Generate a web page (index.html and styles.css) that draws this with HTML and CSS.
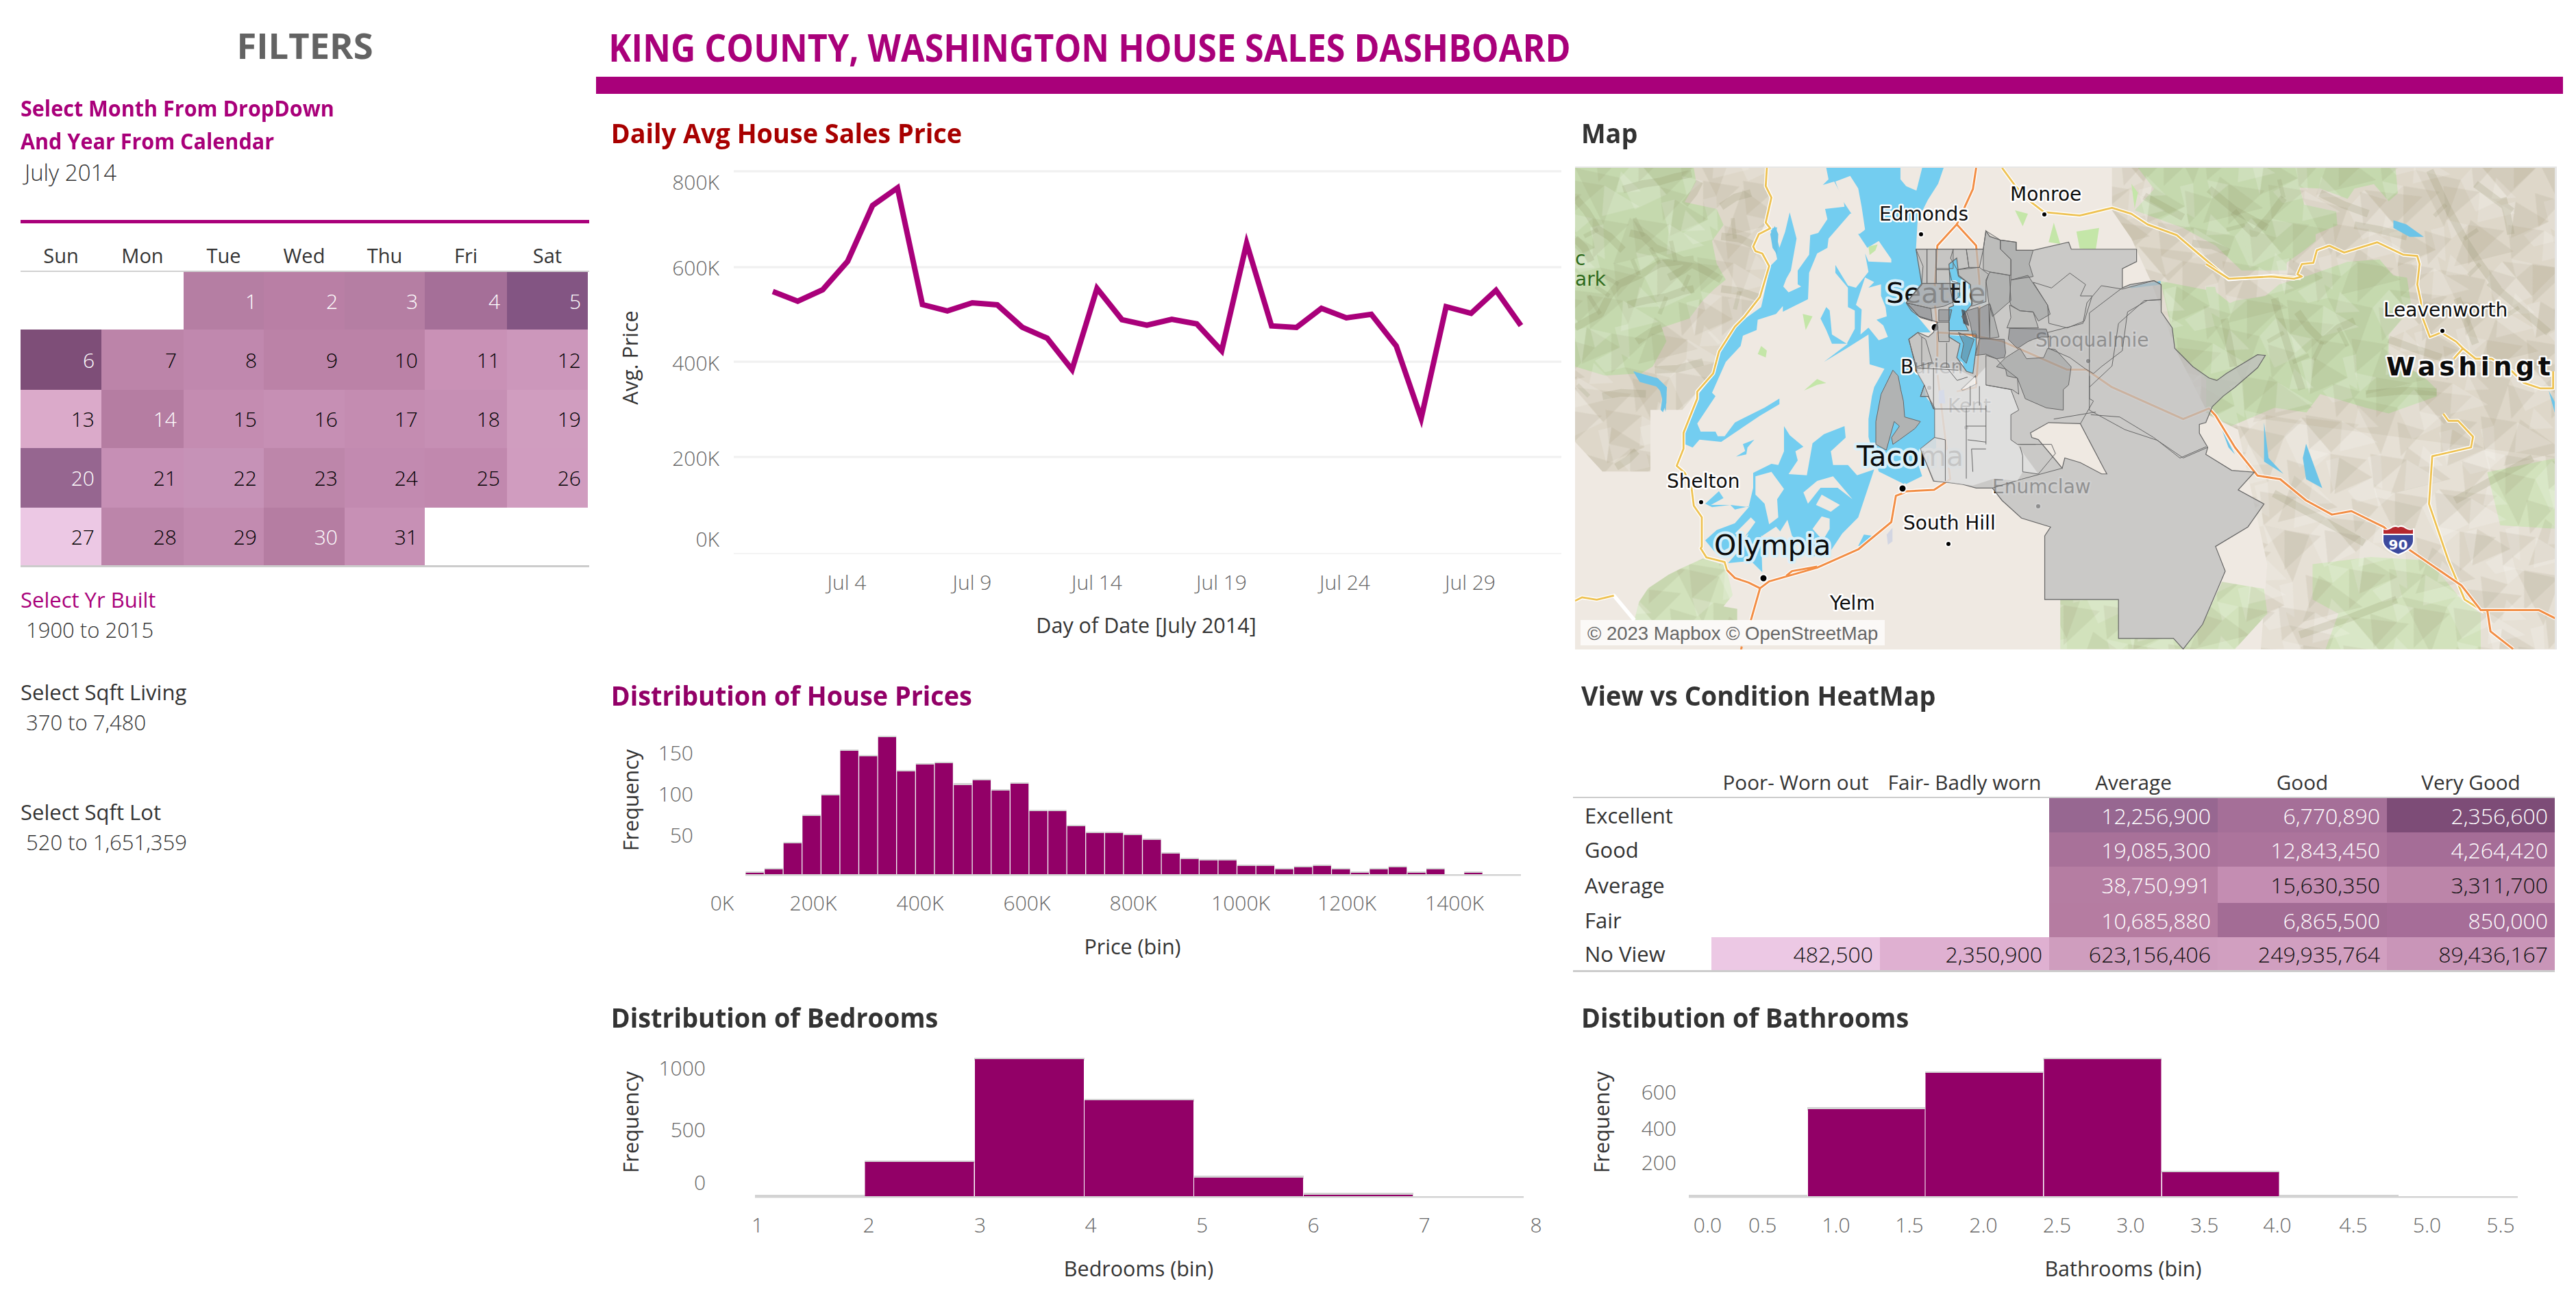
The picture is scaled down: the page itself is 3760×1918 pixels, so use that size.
FILE: index.html
```html
<!DOCTYPE html>
<html lang="en">
<head>
<meta charset="utf-8">
<title>King County House Sales Dashboard</title>
<link rel="stylesheet" href="styles.css">
</head>
<body>
<div class="dashboard">
  <aside class="sidebar">
    <h2 class="filters-title">FILTERS</h2>
    <div class="select-note">Select Month From DropDown<br>And Year From Calendar</div>
    <div class="month">July 2014</div>
    <div class="rule"></div>
    <div class="cal-head"><span>Sun</span><span>Mon</span><span>Tue</span><span>Wed</span><span>Thu</span><span>Fri</span><span>Sat</span></div>
    <div class="calendar">
      <span></span><span></span>
      <span class="lt c-b57ea3">1</span><span class="lt c-b97fa5">2</span><span class="lt c-b57ea3">3</span><span class="lt c-a56f98">4</span><span class="lt c-835583">5</span>
      <span class="lt c-7e4e78">6</span><span class="c-bc84a9">7</span><span class="c-c088ae">8</span><span class="c-bb82a7">9</span><span class="c-bb82a7">10</span><span class="c-c991b6">11</span><span class="c-cc97bb">12</span>
      <span class="c-dbaaca">13</span><span class="lt c-b57da2">14</span><span class="c-c48cb1">15</span><span class="c-c68fb4">16</span><span class="c-c48cb1">17</span><span class="c-c68fb4">18</span><span class="c-d09dbf">19</span>
      <span class="lt c-966690">20</span><span class="c-c68fb5">21</span><span class="c-c692b7">22</span><span class="c-bd86aa">23</span><span class="c-c28ab0">24</span><span class="c-c188ae">25</span><span class="c-d09cbf">26</span>
      <span class="c-ecc8e4">27</span><span class="c-bc85aa">28</span><span class="c-c28bb0">29</span><span class="lt c-b57da2">30</span><span class="c-c790b5">31</span><span></span><span></span>
    </div>
    <div class="filter first"><div class="filter-label accent">Select Yr Built</div><div class="filter-value">1900 to 2015</div></div>
    <div class="filter second"><div class="filter-label">Select Sqft Living</div><div class="filter-value">370 to 7,480</div></div>
    <div class="filter third"><div class="filter-label">Select Sqft Lot</div><div class="filter-value">520 to 1,651,359</div></div>
  </aside>

  <main class="main">
    <h1 class="page-title">KING COUNTY, WASHINGTON HOUSE SALES DASHBOARD</h1>
    <div class="title-bar"></div>
    <div class="panels">
      <section class="panel">
        <h3 class="panel-title tall red">Daily Avg House Sales Price</h3>
        <svg class="chart" width="1429" height="705" viewBox="0 0 1429 705">
          <g class="grid">
            <path d="M201 7H1409"/><path d="M201 147H1409"/><path d="M201 285H1409"/><path d="M201 424H1409"/><path class="grid-zero" d="M201 565H1409"/>
          </g>
          <text class="tick end" x="180" y="34">800K</text>
          <text class="tick end" x="180" y="159">600K</text>
          <text class="tick end" x="180" y="298">400K</text>
          <text class="tick end" x="180" y="437">200K</text>
          <text class="tick end" x="180" y="555">0K</text>
          <polyline class="price-line" points="258,182.6 294.4,196.7 330.8,180 367.2,138.5 403.6,57 440,31.3 476.4,201.6 512.8,210.8 549.2,199 585.6,202 622,234.6 658.4,250.6 694.8,296.5 731.2,178 767.6,223.6 804,231.6 840.4,223 876.8,229.8 913.2,269 949.6,112 986,232.8 1022.4,235 1058.8,207 1095.2,221 1131.6,215.7 1168,262 1204.4,367.5 1240.8,204.6 1277.2,214.4 1313.6,180.8 1350,232.2"/>
          <text class="tick mid" x="366" y="618">Jul 4</text>
          <text class="tick mid" x="549" y="618">Jul 9</text>
          <text class="tick mid" x="731" y="618">Jul 14</text>
          <text class="tick mid" x="913" y="618">Jul 19</text>
          <text class="tick mid" x="1093" y="618">Jul 24</text>
          <text class="tick mid" x="1276" y="618">Jul 29</text>
          <text class="axis mid" x="803" y="681">Day of Date [July 2014]</text>
          <text class="axis mid" transform="translate(61 279) rotate(-90)">Avg. Price</text>
        </svg>
      </section>

      <section class="panel">
        <h3 class="panel-title tall">Map</h3>
        <div class="map-frame">
          <svg class="map" width="1430" height="705" viewBox="0 0 1430 705">
            <defs>
              <pattern id="facetA" patternUnits="userSpaceOnUse" width="170" height="150" patternTransform="rotate(-14)">
                <path class="fd" d="M0 0L60 30L20 90ZM90 10L170 40L120 70ZM60 90L110 150L20 150ZM130 80L170 120L110 130Z"/>
                <path class="fl" d="M60 30L90 10L120 70L70 80ZM0 90L20 90L10 140L0 130ZM110 80L130 80L110 130ZM130 130L170 120L170 150L140 150Z"/>
              </pattern>
              <pattern id="facetB" patternUnits="userSpaceOnUse" width="110" height="130" patternTransform="rotate(31)">
                <path class="fd" d="M0 20L50 0L30 60ZM60 50L110 30L90 100ZM10 90L50 80L40 130Z"/>
                <path class="fl" d="M50 0L110 0L70 40ZM30 60L60 50L50 80ZM60 100L100 110L70 130Z"/>
              </pattern>
              <mask id="terrainMask"><use href="#terrain"/></mask>
            </defs>
            <rect class="land" width="1430" height="705"/>

            <g id="terrain">
              <g transform="scale(.3333)">
                <polygon class="tan" points="0,0 840,0 860,130 835,240 780,345 850,430 810,565 700,695 630,805 600,910 535,980 470,1060 330,1060 330,1330 120,1330 0,1200"/>
                <polygon class="green" points="0,0 520,0 530,60 480,150 620,180 650,250 600,320 620,420 660,490 610,530 560,580 500,660 380,700 400,760 340,870 290,900 130,910 0,870"/>
              </g>
              <g transform="translate(-18.9 -93) scale(.9443 .5165)">
                <polygon class="tan" points="850,180 1537,180 1537,1040 1400,1010 1250,1060 1090,960 1000,880 950,700 910,500 880,380 850,300"/>
                <polygon class="tan-soft" points="1040,880 1537,1000 1537,1540 1080,1540 1090,1300"/>
                <polygon class="green" points="890,180 1120,180 1120,470 1050,470 1010,400 960,350 885,300 915,240"/>
                <polygon class="green" points="925,500 1010,530 1100,660 1090,800 1040,900 1020,820 950,700"/>
                <polygon class="green-soft" points="1430,1040 1537,1000 1537,1200 1450,1190"/>
                <polygon class="green-soft" points="1160,1300 1250,1280 1340,1290 1390,1400 1420,1440 1420,1540 1180,1540 1200,1440 1160,1400"/>
                <polygon class="green-soft" points="770,1400 860,1400 860,1510 945,1510 960,1540 770,1540"/>
                <polygon class="green-soft" points="990,1470 1020,1350 1085,1370 1090,1440 1040,1540 960,1540"/>
              </g>
              <g transform="translate(921 -143) scale(.3333)">
                <polygon class="green" points="0,430 830,430 840,540 800,575 735,500 650,520 620,565 500,520 410,515 430,590 570,620 575,680 480,720 480,750 430,790 330,860 200,870 175,790 140,600 0,555"/>
                <polygon class="green" points="450,900 620,840 760,830 820,900 880,910 900,1040 800,1160 800,1260 950,1340 1010,1400 1010,1430 800,1505 700,1480 500,1420 440,1500 300,1480 110,1560 0,1500 0,950 40,950 60,1040 130,1010 260,990 320,940"/>
              </g>
              <g transform="translate(0 377) scale(.3333)">
                <polygon class="green-soft" points="280,770 320,710 410,650 470,620 560,580 660,610 690,740 650,790 710,800 710,850 260,850"/>
              </g>
            </g>
            <g mask="url(#terrainMask)">
              <rect class="facet-a" width="1430" height="705"/>
              <rect class="facet-b" width="1430" height="705"/>
              <g transform="scale(.3333)">
                <path class="ridge" d="M0 700L70 660L110 640L150 560L190 510L280 470L370 420L450 410L520 400M210 95L300 70L370 60L440 40L510 25M0 130L50 190L100 270L150 300L210 360M240 285L300 300L350 350L420 380L500 420M410 480L470 450L510 420L570 450L640 490M230 600L310 580L400 565L470 540L520 530M270 760L330 720L380 700M350 885L450 880L560 850M480 160L520 110L545 60M0 310L40 350L70 410M640 170L700 130L770 110M640 300L720 310L810 350M640 530L720 540L810 570M120 1000L200 985L310 990M180 1310L230 1280L270 1240"/>
                <path class="ridge-thin" d="M100 270L40 300M190 510L120 470M370 420L330 350M300 300L260 220M440 410L420 320M110 640L60 560M470 540L500 470M60 1000L10 950M150 560L90 520M280 470L250 400M400 565L370 640M700 310L690 220M720 540L700 620"/>
              </g>
              <g transform="translate(921 -143) scale(.3333)">
                <path class="ridge" d="M120 620L170 680L210 720L280 640L340 560M500 540L600 590L710 630M650 680L760 700L880 730M980 440L1050 590L1130 740L1200 850L1280 960M1300 560L1320 640L1335 720M400 1060L450 1130L510 1190L580 1130L650 1100M300 1000L340 1150L380 1280L420 1400M700 1420L860 1405L1010 1410M800 1180L910 1220L1030 1260M1180 500L1260 560L1340 620M1240 930L1370 1040L1500 1150M80 1090L100 1190L120 1300M-60 760L30 770L100 800M1100 1000L1140 1100L1180 1200"/>
                <path class="ridge-thin" d="M170 680L90 700M340 560L320 480M1050 590L1000 640M1130 740L1190 700M510 1190L470 1270M580 1130L620 1210M340 1150L270 1190M380 1280L450 1250M1200 850L1150 900M1370 1040L1310 1080"/>
              </g>
              <g transform="translate(-18.9 -93) scale(.9443 .5165)">
                <path class="ridge" d="M1000 240L1040 300L1090 350M1100 1100L1170 1170L1240 1240M1380 1120L1440 1060L1500 1000M1140 1500L1220 1450L1290 1400M900 260L930 290L960 320"/>
              </g>
            </g>

            <g transform="translate(-18.9 -93) scale(.9443 .5165)">
              <polygon class="green-pale" points="700,300 720,310 712,345"/>
              <polygon class="green-pale" points="880,225 890,250 885,295"/>
              <polygon class="green-pale" points="760,335 770,395 752,390"/>
              <polygon class="green-pale" points="795,360 830,350 825,410 800,408"/>
              <polygon class="green-pale" points="380,590 392,600 380,635"/>
              <polygon class="green-pale" points="378,810 410,780 400,800"/>
              <polygon class="green-pale" points="305,685 318,710 306,715"/>
            </g>

            <!-- Puget Sound -->
            <g transform="scale(.3333)">
              <polygon class="water" points="855,265 885,400 855,430 815,610 745,660 700,700 630,810 610,905 545,985 530,1030 480,1160 480,1210 515,1225 545,1190 640,1200 810,1085 895,1035 1285,1180 1300,1230 1330,1330 1440,1385 1500,1300 1581,1290 1581,1181 1575,1051 1535,1001 1529,951 1495,891 1460,751 1501,721 1558,721 1449,591 1524,501 1493,356 1500,230 1545,140 1590,70 1614,0 1100,0"/>
              <polygon class="land" points="845,0 1100,0 1110,50 1085,75 1135,60 1175,135 1180,170 1095,180 1105,225 1065,285 1030,295 1025,380 975,450 975,510 990,520 935,545 912,520 925,485 945,450 970,310 940,195 920,280 895,350 880,290 885,260 860,265 835,240 860,130 835,80"/>
              <polygon class="land" points="535,1120 615,1000 600,985 660,850 725,780 735,735 795,710 800,665 880,640 910,605 910,630 1020,575 1025,460 1060,375 1105,350 1110,310 1205,200 1240,200 1265,275 1240,290 1280,350 1330,320 1385,400 1385,415 1285,410 1270,375 1285,455 1230,525 1195,515 1140,425 1140,460 1195,525 1195,610 1225,625 1225,705 1190,770 1125,730 1115,625 1100,610 1075,660 1100,710 1125,770 1195,770 1090,850 1190,790 1285,730 1290,860 1355,880 1310,960 1300,1000 1285,1100 1285,1190 895,1040 895,1010 830,1050 700,1115 655,1175 625,1175 615,1155 550,1155"/>
              <polygon class="land" points="1270,480 1310,500 1285,525 1340,510 1340,560 1360,610 1365,650 1320,665 1350,690 1370,740 1330,755 1285,700 1250,730 1255,620 1230,600"/>
              <polygon class="land" points="1205,35 1240,90 1255,170 1270,270 1245,290 1210,200 1170,140 1140,60"/>
              <polygon class="land" points="1425,0 1520,0 1505,60 1495,100 1450,80 1425,50"/>
              <polygon class="green-pale" points="1285,345 1325,335 1315,362 1290,382"/>
              <polygon class="green-pale" points="997,640 1040,650 1010,710"/>
              <polygon class="green-pale" points="1003,975 1060,925 1100,942 1060,950"/>
              <polygon class="green-pale" points="800,815 815,780 840,800 835,830"/>
              <polygon class="water" points="785,1190 735,1210 745,1240 705,1265 750,1255 755,1225"/>
              <polygon class="lake" points="260,890 290,915 360,920 400,990 400,1030 385,1070 375,1060 385,990 340,940 280,930"/>
              <polygon class="lake" points="875,255 890,290 885,380 865,350 855,290"/>
              <polygon class="water" points="1360,1300 1410,1290 1500,1290 1520,1350 1450,1385 1390,1340"/>
            </g>
            <g transform="translate(0 377) scale(.3333)">
              <polygon class="water" points="915,0 940,40 1000,90 965,110 975,150 935,210 1015,215 1040,75 1090,35 1180,0 1185,50 1120,110 1130,170 1195,170 1235,215 1310,190 1240,400 1170,470 1110,560 1040,570 950,480 930,410 880,490 815,480 820,640 770,590 670,600 740,520 760,470 700,520 620,560 570,500 620,455 700,425 765,350 700,365 680,345 600,355 570,340 630,285 650,315 595,345 680,345 760,355 780,270 780,205 860,165 890,170 915,110"/>
              <polygon class="land" points="1055,345 1080,300 1160,345 1120,375"/>
              <polygon class="land" points="1040,450 1080,395 1115,405 1115,450 1085,500"/>
              <polygon class="land" points="915,275 860,200 790,220 790,300 830,340 850,430 890,400 885,320"/>
              <polygon class="land" points="770,400 790,420 740,490 700,470"/>
              <polygon class="land" points="1000,290 1060,240 1130,220 1190,290 1215,320 1150,270 1075,270 1020,340"/>
              <polygon class="land" points="820,480 880,440 915,480 900,530"/>
              <polygon class="lake-gray" points="1365,475 1390,445 1390,505 1370,520"/>
              <polygon class="water" points="1240,525 1265,475 1300,480 1250,525"/>
            </g>
            <g transform="translate(-18.9 -93) scale(.9443 .5165)">
              <polygon class="water" points="598,452 610,435 613,484 631,510 634,565 618,600 628,640 640,640 640,690 635,761 625,755 610,716 615,677 598,658 598,575 605,570 600,520"/>
              <polygon class="lake" points="1085,900 1092,1000 1115,1045 1085,1010"/>
              <polygon class="lake" points="1150,960 1175,1085 1150,1060 1145,1000"/>
              <polygon class="lake" points="1020,920 1040,990 1030,970"/>
              <polygon class="lake" points="1525,810 1537,850 1537,890"/>
              <polygon class="lake" points="875,515 925,500 925,510 880,520"/>
              <polygon class="lake" points="1285,328 1305,340 1332,375 1310,375 1285,350"/>
              <polygon class="lake" points="110,755 148,775 162,800 160,870 150,800 120,785"/>
            </g>

            <!-- roads -->
            <g transform="scale(.3333)">
              <path class="casing" d="M840 0L835 80L860 130L835 240L855 265L805 290L780 345L790 365L820 375L850 430L810 565L740 655L700 695L630 805L605 900L535 980L535 1010L475 1160L475 1230L445 1305L480 1335L510 1400L520 1480L555 1530V1660L550 1666L575 1706L655 1726L665 1761"/>
              <path class="yel" d="M840 0L835 80L860 130L835 240L855 265L805 290L780 345L790 365L820 375L850 430L810 565L740 655L700 695L630 805L605 900L535 980L535 1010L475 1160L475 1230L445 1305L480 1335L510 1400L520 1480L555 1530V1660L550 1666L575 1706L655 1726L665 1761"/>
            </g>
            <g transform="translate(0 377) scale(.3333)">
              <path class="casing" d="M0 765L30 750L95 760L170 742L260 850"/>
              <path class="yel" d="M0 765L30 750L95 760L170 742"/>
              <path class="casing" d="M665 630L700 665L760 685L810 710L850 680L1060 620L1240 540L1385 420L1405 305L1460 285L1560 280M810 710L770 850M925 655L950 635L1060 615"/>
              <path class="org" d="M665 630L700 665L760 685L810 710L850 680L1060 620L1240 540L1385 420L1405 305L1460 285L1560 280M810 710L770 850M925 655L950 635L1060 615M730 965L725 990"/>
            </g>
            <g transform="translate(-18.9 -93) scale(.9443 .5165)">
              <path class="casing" d="M680 180L700 230L720 270L745 305L800 315L850 293L880 310L905 340L950 370L1030 495L1100 485L1142 492"/>
              <path class="yel" d="M680 180L700 230L720 270L745 305L800 315L850 293L880 310L905 340L950 370L1030 495L1100 485L1142 492"/>
              <path class="casing" d="M1362 875L1370 895L1385 895L1408 940L1405 970L1345 995L1340 1130L1370 1290L1395 1400L1425 1435"/>
              <path class="yel" d="M1362 875L1370 895L1385 895L1408 940L1405 970L1345 995L1340 1130L1370 1290L1395 1400L1425 1435"/>
              <path class="casing" d="M640 180L635 240L610 340L580 400L575 540L580 640L580 760L600 1060L575 1090L525 1095M610 340L640 400L645 500L645 660L640 800L610 812M580 645L625 650L680 670L780 750L810 750L850 800L960 890L1000 860L1010 880L1040 970L1075 1050L1110 1060L1150 1120L1190 1160L1220 1150L1270 1195L1310 1260L1390 1360L1420 1430L1510 1430L1537 1455M1430 1430L1435 1490L1470 1540"/>
              <path class="org" d="M640 180L635 240L610 340L580 400L575 540L580 640L580 760L600 1060L575 1090L525 1095M610 340L640 400L645 500L645 660L640 800L610 812M580 645L625 650L680 670L780 750L810 750L850 800L960 890L1000 860L1010 880L1040 970L1075 1050L1110 1060L1150 1120L1190 1160L1220 1150L1270 1195L1310 1260L1390 1360L1420 1430L1510 1430L1537 1455M1430 1430L1435 1490L1470 1540"/>
            </g>
            <g transform="translate(921 -143) scale(.3333)">
              <path class="casing" d="M0 850L100 915L285 905L385 915L420 905L400 895L420 850L470 845L485 790L540 770L605 800L750 755L865 810L925 815L935 850L925 940L940 1010L950 1090L980 1170L1030 1150L1095 1190L1125 1220L1180 1265L1250 1265L1340 1320L1390 1370L1465 1395L1520 1395V1320M1125 1220L1085 1265"/>
              <path class="yel" d="M0 850L100 915L285 905L385 915L420 905L400 895L420 850L470 845L485 790L540 770L605 800L750 755L865 810L925 815L935 850L925 940L940 1010L950 1090L980 1170L1030 1150L1095 1190L1125 1220L1180 1265L1250 1265L1340 1320L1390 1370L1465 1395L1520 1395V1320M1125 1220L1085 1265"/>
            </g>

            <!-- places, under the county shading -->
            <g class="dots">
              <circle cx="505" cy="97" r="4"/><circle cx="685" cy="68" r="4"/><circle cx="525.5" cy="233" r="6"/>
              <circle cx="478" cy="468" r="5.5"/><circle cx="184" cy="488" r="4"/><circle cx="275" cy="599" r="5.5"/>
              <circle cx="545" cy="549" r="4"/><circle cx="1266" cy="238" r="4"/><circle cx="558" cy="289" r="4"/>
              <circle cx="571" cy="379" r="4"/><circle cx="517" cy="321" r="4"/><circle cx="749" cy="282" r="4"/><circle cx="676" cy="494" r="4"/>
            </g>
            <text class="place" x="444" y="77">Edmonds</text>
            <text class="place" x="635" y="48">Monroe</text>
            <text class="place" x="134" y="467">Shelton</text>
            <text class="place" x="479" y="528">South Hill</text>
            <text class="place" x="372" y="645">Yelm</text>
            <text class="place" x="475" y="300">Burien</text>
            <text class="place" x="544" y="357">Kent</text>
            <text class="place" x="672" y="261">Snoqualmie</text>
            <text class="place" x="609" y="475">Enumclaw</text>
            <text class="place" x="1180" y="217">Leavenworth</text>
            <text class="place big" x="454" y="197">Seattle</text>
            <text class="place big" x="411" y="435">Tacoma</text>
            <text class="place big" x="203" y="565">Olympia</text>
            <text class="place state" x="1184" y="303">Washingt</text>
            <text class="park" x="0" y="142">c</text>
            <text class="park" x="0" y="172">ark</text>

            <!-- King County zip areas -->
            <g transform="translate(-18.9 -93) scale(.9443 .5165)">
              <path class="county" d="M547 410H651L655 358L661 374L677 384L702 390V413H728L783 390L787 410H888V445L866 465V519L878 510L915 499L926 510V587L943 632L947 690L975 742L1000 774L1012 781L1027 761L1075 708L1087 710L1075 745L1040 800L1022 825L1005 855L995 900L985 905V930L998 970L995 990L1035 1035L1070 1040L1045 1090L1085 1130L1060 1195L1010 1250L1025 1320L990 1470L960 1540L945 1510H860V1400H746V1220L755 1195L710 1170L680 1120L665 1085H640L620 1075L600 1070L574 1065L554 974L576 942V858L566 826H554L560 794L548 755L536 664L550 645L566 658L574 645L580 616L552 600L532 561L556 510ZM598 452L610 435L613 484L631 510L634 565L618 600L628 640H598V575L605 570L600 520ZM598 650H640V690L635 761L625 755L610 716L615 677L598 658ZM724 929L752 900L801 903L838 1032L842 1045H834L801 1013L777 1000L773 1029L760 1000L736 948L726 942ZM617 806L639 768L641 790L619 810Z"/>
              <path class="zone-line" d="M815 590V800L815 865L870 920L920 950L960 1000L998 970M866 519L815 590M665 1085L710 1060L773 1029M926 553L900 555L860 620L850 740L815 800M825 870L760 890"/>
            </g>
            <g transform="translate(351 77) scale(.3827 .3333)">
              <polygon class="light-zone" points="450,640 540,650 610,690 650,640 650,720 745,740 775,830 745,850 745,960 770,980 780,1000 850,1110 790,1100 770,1140 680,1130 600,1160 455,1140 400,1000 455,950 455,820 430,770 415,720 385,660"/>
              <polygon class="zip d0" points="383,125 425,125 425,275 405,275 410,200"/>
              <polygon class="zip d0" points="425,125 460,125 460,275 425,275"/>
              <polygon class="zip d0" points="460,125 525,125 525,210 460,210"/>
              <polygon class="zip d0" points="525,125 575,125 585,205 540,215 515,165"/>
              <polygon class="zip d0" points="575,125 640,125 625,205 585,205"/>
              <polygon class="zip d0" points="460,215 510,215 520,265 550,275 460,275"/>
              <polygon class="zip d2" points="405,275 550,275 550,330 520,360 490,375 440,385 345,360"/>
              <polygon class="zip d3" points="345,360 440,385 445,440 400,425 365,395"/>
              <polygon class="zip d3" points="470,390 520,390 510,440 470,440"/>
              <polygon class="zip d1" points="465,445 510,445 510,530 470,530"/>
              <polygon class="zip d1" points="540,215 625,205 660,235 650,270 650,355 595,375 590,280 545,245"/>
              <polygon class="zip d3" points="575,395 620,380 625,515 600,510 590,450"/>
              <polygon class="zip d3" points="625,385 660,365 665,515 625,515"/>
              <polygon class="zip d2" points="665,365 680,420 700,510 665,515"/>
              <polygon class="zip d3" points="545,490 605,520 590,570 575,625 555,600 565,540"/>
              <polygon class="zip d4" points="558,390 570,395 585,460 565,450"/>
              <polygon class="zip d2" points="650,260 665,225 740,240 745,350 675,420 660,355"/>
              <polygon class="zip d1" points="640,125 650,45 705,85 705,125 745,170 745,240 665,225 640,215"/>
              <polygon class="zip d2" points="705,85 765,95 765,130 830,130 815,190 830,245 745,260 745,170 705,125"/>
              <polygon class="zip d2" points="745,260 810,240 885,370 895,410 850,440 830,400 780,395 745,370 740,350"/>
              <polygon class="zip d1" points="740,370 780,395 830,400 850,470 730,470 745,425"/>
              <polygon class="zip d3" points="740,472 880,475 890,510 860,510 830,520 810,530 770,560 735,520"/>
              <polygon class="zip d3" points="625,518 720,520 725,580 720,600 690,605 650,585 610,590"/>
              <polygon class="zip d2" points="725,600 780,560 805,605 870,600 885,560 915,565 975,640 965,720 945,740 945,830 880,820 800,780 770,690 730,680 725,650 690,640"/>
              <polygon class="zip d0" points="650,590 690,605 725,650 770,690 775,760 750,740 650,720"/>
              <polygon class="zip none" points="830,270 900,295 970,230 1030,280 1010,330 1055,330 1025,440 960,470 890,450 885,370"/>
              <polygon class="zip d0" points="1035,360 1090,285 1170,300 1290,263 1318,280 1318,345 1265,350 1190,400 1170,570 1090,640 1060,670 1030,650 970,600 890,560 885,490 1020,450"/>
              <polygon class="zip vashon" points="295,655 315,680 325,740 335,790 340,860 400,880 380,910 320,960 295,980 290,950 320,900 300,880 270,1005 230,980 230,880 250,760"/>
              <polygon class="zip d0" points="355,520 390,490 400,505 420,520 445,620 385,640"/>
              <polygon class="zip d0" points="400,770 415,720 450,825 430,770"/>
              <polygon class="light-patch" points="470,745 490,740 495,800 470,800"/>
              <path class="zip-lines" d="M385 645L545 655M405 510V640M450 645V825H650M500 535V645M505 650L540 700L580 685M590 725V810M625 725V810M650 810V980M575 900H650M575 820V1130M455 950L495 960V1140M580 960L650 970M650 1000L595 1000L600 1100M650 720L745 740L775 830L745 850V960L770 980H840M780 980H900L915 1020L850 1110L790 1100V1030L780 990M1045 680V780L1060 790L1010 890M1050 850L1160 860L1290 950L1390 1040L1490 990"/>
            </g>

            <rect class="credit-bg" x="8" y="660" width="444" height="37"/>
            <text class="credit" x="18" y="689">© 2023 Mapbox © OpenStreetMap</text>

            <g transform="translate(1178 521)">
              <path class="shield-w" d="M0 5Q6 8 12 4Q18 -2 23.500 2Q29 -2 35 4Q41 8 47 5L47 24Q46 37 23.500 45Q1 37 0 24Z"/>
              <path class="shield-b" d="M2 15H45V24Q44 35 23.500 42.500Q3 35 2 24Z"/>
              <path class="shield-r" d="M2 7Q7 9 12 6Q18 1 23.500 4Q29 1 35 6Q40 9 45 7V13H2Z"/>
              <text class="shield-t" x="23.500" y="36">90</text>
            </g>
          </svg>
        </div>
      </section>

      <section class="panel">
        <h3 class="panel-title purple">Distribution of House Prices</h3>
        <svg class="chart" width="1429" height="410" viewBox="0 0 1429 410">
          <g transform="translate(14 0)">
            <path class="bar-cap thin" d="M217.700 232V227M245.300 232V222M272.900 232V184M300.500 232V144M328.100 232V114M355.700 232V49M383.300 232V57M410.900 232V29M438.500 232V79M466.100 232V69M493.700 232V67M521.300 232V98M548.900 232V92M576.500 232V107M604.100 232V97M631.700 232V137M659.300 232V137M686.900 232V159M714.500 232V169M742.100 232V169M769.700 232V172M797.300 232V179M824.900 232V199M852.500 232V207M880.100 232V209M907.700 232V209M935.300 232V217M962.900 232V217M990.500 232V222M1018.100 232V219M1045.700 232V217M1073.300 232V222M1100.900 232V227M1128.500 232V222M1156.100 232V219M1183.700 232V227M1211.300 232V222M1266.500 232V227"/>
            <path class="bar thin" d="M217.700 232V229M245.300 232V224M272.900 232V186M300.500 232V146M328.100 232V116M355.700 232V51M383.300 232V59M410.900 232V31M438.500 232V81M466.100 232V71M493.700 232V69M521.300 232V101M548.900 232V94M576.500 232V109M604.100 232V99M631.700 232V139M659.300 232V139M686.900 232V161M714.500 232V171M742.100 232V171M769.700 232V174M797.300 232V181M824.900 232V201M852.500 232V209M880.100 232V211M907.700 232V211M935.300 232V219M962.900 232V219M990.500 232V224M1018.100 232V221M1045.700 232V219M1073.300 232V224M1100.900 232V229M1128.500 232V224M1156.100 232V221M1183.700 232V229M1211.300 232V224M1266.500 232V229"/>
          </g>
          <rect class="baseline" x="218" y="231" width="1132" height="2.500"/>
          <text class="tick end" x="142" y="65">150</text>
          <text class="tick end" x="142" y="125">100</text>
          <text class="tick end" x="142" y="185">50</text>
          <text class="tick mid" x="184" y="284">0K</text>
          <text class="tick mid" x="317" y="284">200K</text>
          <text class="tick mid" x="473" y="284">400K</text>
          <text class="tick mid" x="629" y="284">600K</text>
          <text class="tick mid" x="784" y="284">800K</text>
          <text class="tick mid" x="941" y="284">1000K</text>
          <text class="tick mid" x="1096" y="284">1200K</text>
          <text class="tick mid" x="1253" y="284">1400K</text>
          <text class="axis mid" x="783" y="348">Price (bin)</text>
          <text class="axis mid" transform="translate(62 123) rotate(-90)">Frequency</text>
        </svg>
      </section>

      <section class="panel">
        <h3 class="panel-title">View vs Condition HeatMap</h3>
        <div class="heat">
          <div class="hh"></div><div class="hh">Poor- Worn out</div><div class="hh">Fair- Badly worn</div><div class="hh">Average</div><div class="hh">Good</div><div class="hh">Very Good</div>
          <div class="rh">Excellent</div><div></div><div></div><div class="hc lt c-976791">12,256,900</div><div class="hc lt c-a56f98">6,770,890</div><div class="hc lt c-7d4c77">2,356,600</div>
          <div class="rh">Good</div><div></div><div></div><div class="hc lt c-a87199">19,085,300</div><div class="hc lt c-ac749c">12,843,450</div><div class="hc lt c-a56d97">4,264,420</div>
          <div class="rh">Average</div><div></div><div></div><div class="hc lt c-b57da2">38,750,991</div><div class="hc c-c48db2">15,630,350</div><div class="hc c-bc85a9">3,311,700</div>
          <div class="rh">Fair</div><div></div><div></div><div class="hc lt c-b57ca1">10,685,880</div><div class="hc lt c-a36c95">6,865,500</div><div class="hc lt c-a66d98">850,000</div>
          <div class="rh">No View</div><div class="hc c-ecc8e4">482,500</div><div class="hc c-dfb0d1">2,350,900</div><div class="hc c-cf9dbe">623,156,406</div><div class="hc c-d19fc0">249,935,764</div><div class="hc c-c995b8">89,436,167</div>
        </div>
      </section>

      <section class="panel">
        <h3 class="panel-title">Distribution of Bedrooms</h3>
        <svg class="chart" width="1429" height="403" viewBox="0 0 1429 403">
          <rect class="cap" x="232" y="229" width="161" height="3"/>
          <rect class="cap" x="392" y="179" width="160.500" height="4"/><rect class="fill" x="392.500" y="181" width="159" height="51"/>
          <rect class="cap" x="552" y="29" width="161" height="4"/><rect class="fill" x="553" y="31" width="159" height="201"/>
          <rect class="cap" x="713" y="89" width="160" height="4"/><rect class="fill" x="713" y="91" width="159" height="141"/>
          <rect class="cap" x="873" y="201" width="160" height="5"/><rect class="fill" x="873" y="204" width="159" height="28"/>
          <rect class="cap" x="1033" y="226" width="160" height="5"/><rect class="fill" x="1033" y="229" width="159" height="3"/>
          <rect class="baseline" x="232" y="231" width="1122" height="2.500"/>
          <text class="tick end" x="160" y="55">1000</text>
          <text class="tick end" x="160" y="145">500</text>
          <text class="tick end" x="160" y="222">0</text>
          <text class="tick mid" x="235.500" y="284">1</text>
          <text class="tick mid" x="398" y="284">2</text>
          <text class="tick mid" x="560.500" y="284">3</text>
          <text class="tick mid" x="722" y="284">4</text>
          <text class="tick mid" x="884.500" y="284">5</text>
          <text class="tick mid" x="1047" y="284">6</text>
          <text class="tick mid" x="1209" y="284">7</text>
          <text class="tick mid" x="1372" y="284">8</text>
          <text class="axis mid" x="792" y="348">Bedrooms (bin)</text>
          <text class="axis mid" transform="translate(62 123) rotate(-90)">Frequency</text>
        </svg>
      </section>

      <section class="panel">
        <h3 class="panel-title">Distibution of Bathrooms</h3>
        <svg class="chart" width="1442" height="403" viewBox="0 0 1442 403">
          <rect class="cap" x="166" y="229" width="173" height="3"/>
          <rect class="cap" x="339" y="101" width="172" height="5"/><rect class="fill" x="340" y="104" width="170.500" height="128"/>
          <rect class="cap" x="511" y="49" width="172.500" height="4"/><rect class="fill" x="511.500" y="51" width="171.500" height="181"/>
          <rect class="cap" x="683.500" y="29" width="172.500" height="4"/><rect class="fill" x="684.500" y="31" width="171" height="201"/>
          <rect class="cap" x="856" y="194" width="172" height="4"/><rect class="fill" x="857" y="196" width="170.500" height="36"/>
          <rect class="cap" x="1028" y="229" width="174" height="3"/>
          <rect class="baseline" x="166" y="231" width="1210" height="2.500"/>
          <text class="tick end" x="148" y="90">600</text>
          <text class="tick end" x="148" y="143">400</text>
          <text class="tick end" x="148" y="193">200</text>
          <text class="tick mid" x="193.500" y="284">0.0</text>
          <text class="tick mid" x="273.700" y="284">0.5</text>
          <text class="tick mid" x="381" y="284">1.0</text>
          <text class="tick mid" x="488" y="284">1.5</text>
          <text class="tick mid" x="596" y="284">2.0</text>
          <text class="tick mid" x="703.400" y="284">2.5</text>
          <text class="tick mid" x="811" y="284">3.0</text>
          <text class="tick mid" x="918.700" y="284">3.5</text>
          <text class="tick mid" x="1025" y="284">4.0</text>
          <text class="tick mid" x="1136" y="284">4.5</text>
          <text class="tick mid" x="1243.500" y="284">5.0</text>
          <text class="tick mid" x="1351" y="284">5.5</text>
          <text class="axis mid" x="800" y="348">Bathrooms (bin)</text>
          <text class="axis mid" transform="translate(50 123) rotate(-90)">Frequency</text>
        </svg>
      </section>
    </div>
  </main>
</div>
</body>
</html>
```

FILE: styles.css
```css
* { box-sizing: border-box; }
html, body { margin: 0; padding: 0; background: #fff; }
body { width: 3760px; height: 1918px; overflow: hidden; font-family: "Open Sans", "Noto Sans", sans-serif; color: #333; }
h1, h2, h3 { margin: 0; }

.dashboard { display: flex; width: 3760px; height: 1918px; }

/* sidebar */
.sidebar { width: 870px; flex: none; padding-left: 30px; padding-right: 10px; }
.filters-title { height: 132px; line-height: 132px; text-align: center; font-size: 52.500px; font-weight: 700; color: #636363; }
.select-note { margin-top: 2px; font-size: 33px; line-height: 48px; font-weight: 700; color: #a9007a; white-space: nowrap; transform: scaleX(.925); transform-origin: left center; }
.month { height: 45px; margin-left: 6px; line-height: 44px; font-size: 33px; font-weight: 300; color: #333; }
.rule { height: 5px; margin-top: 46px; background: #a9007a; }
.cal-head { display: grid; grid-template-columns: 118px 120px 117px 118px 117px 120px 118px; height: 71px; padding-top: 24px; border-bottom: 2px solid #d0d0d0; text-align: center; font-size: 29px; line-height: 46px; color: #333; }
.calendar { display: grid; grid-template-columns: 118px 120px 117px 118px 117px 120px 118px; grid-template-rows: 84px 88px 85px 87px 84px; border-bottom: 3px solid #ccc; font-size: 30px; font-weight: 300; color: #000; }
.calendar span { display: flex; align-items: center; justify-content: flex-end; padding-right: 10px; }
.calendar .lt { color: #fff; }
.lt { color: #fff; }
.filter-label { height: 44px; line-height: 44px; font-size: 31px; color: #333; }
.filter-label.accent { color: #a9007a; }
.filter-value { height: 45px; margin-left: 8px; line-height: 44px; font-size: 31px; font-weight: 300; color: #333; }
.filter.first { margin-top: 25px; }
.filter.second { margin-top: 46px; }
.filter.third { margin-top: 86px; }

/* main */
.main { width: 2871px; flex: none; display: flex; flex-direction: column; }
.page-title { height: 112px; padding: 36px 0 0 20px; line-height: 66px; font-size: 55px; font-weight: 700; color: #a9007a; white-space: nowrap; transform: scaleX(.912); transform-origin: left center; }
.title-bar { height: 25px; background: #a9007a; }
.panels { display: grid; grid-template-columns: 1429px 1442px; grid-template-rows: 848px 470px 463px; }
.panel { display: flex; flex-direction: column; min-width: 0; }
.panel-title { flex: none; height: 60px; padding-left: 23px; padding-top: 4px; line-height: 52px; font-size: 40px; font-weight: 700; color: #333; white-space: nowrap; transform: scaleX(.945); transform-origin: left center; }
.panel:nth-child(even) .panel-title { padding-left: 9.500px; }
.panel-title.tall { height: 106px; padding-top: 31px; }
.panel-title.red { color: #a80000; }
.panel-title.purple { color: #920067; }
.chart { display: block; flex: none; }

.grid path { stroke: #f0f0f0; stroke-width: 3px; fill: none; }
.grid .grid-zero { stroke-width: 1.500px; }
.tick { font-size: 30px; font-weight: 300; fill: #666; }
.axis { font-size: 30.500px; fill: #333; }
.end { text-anchor: end; }
.mid { text-anchor: middle; }
.price-line { fill: none; stroke: #a9007a; stroke-width: 8px; stroke-linejoin: miter; }

.bar { fill: none; stroke: #920067; }
.bar-cap { fill: none; stroke: #d3d3d3; }
.bar.thin { stroke-width: 26.200px; }
.bar-cap.thin { stroke-width: 26.800px; }
.cap { fill: #d3d3d3; }
.fill { fill: #920067; }
.baseline { fill: #d3d3d3; }

/* heat table */
.heat { display: grid; grid-template-columns: 202px 246px 247px 246px 247px 245px; grid-template-rows: 45px 50px 50px 53px 50px 48px; margin: 75px 0 0 -3px; width: 1433px; border-bottom: 3px solid #ccc; font-size: 32px; font-weight: 300; color: #111; }
.hh { display: flex; align-items: center; justify-content: center; border-bottom: 2px solid #ccc; font-weight: 400; white-space: nowrap; font-size: 29.700px; color: #333; }
.rh { display: flex; align-items: center; padding-left: 17px; font-weight: 400; font-size: 31px; color: #333; }
.hc { display: flex; align-items: center; justify-content: flex-end; padding-right: 10px; }

/* map */
.map-frame { width: 1433px; height: 705px; border-top: 2px solid #e6e6e6; border-right: 3px solid #e6e6e6; overflow: hidden; }
.map { display: block; }
.map polygon, .map path { vector-effect: non-scaling-stroke; }
.land { fill: #efe9e2; }
.tan { fill: #ded7c9; }
.tan-soft { fill: #e6e0d5; }
.green { fill: #c5d9ae; }
.green-soft { fill: #d2e2bc; }
.green-pale { fill: #c4e6a8; }
.water { fill: #73cdf0; }
.lake { fill: #6cc4e8; }
.lake-gray { fill: #d3d6e2; }
.fd { fill: rgba(110, 100, 60, .1); }
.fl { fill: rgba(255, 255, 255, .2); }
.facet-a { fill: url(#facetA); }
.facet-b { fill: url(#facetB); }
.ridge { fill: none; stroke: rgba(115, 115, 65, .17); stroke-width: 11px; stroke-linejoin: bevel; }
.ridge-thin { fill: none; stroke: rgba(115, 115, 65, .14); stroke-width: 6px; }
.casing { fill: none; stroke: #fff; stroke-width: 5.500px; stroke-linejoin: round; }
.yel { fill: none; stroke: #eec253; stroke-width: 2.800px; stroke-linejoin: round; }
.org { fill: none; stroke: #f28e45; stroke-width: 3px; stroke-linejoin: round; }
.dots circle { fill: #000; stroke: #fff; stroke-width: 2px; }
.place { font-family: "DejaVu Sans", sans-serif; font-size: 28px; fill: #0c0c0c; stroke: #fff; stroke-width: 5px; stroke-linejoin: round; paint-order: stroke; }
.place.big { font-size: 41px; stroke: #d8f0fa; stroke-width: 8px; }
.place.state { font-size: 38px; font-weight: 700; letter-spacing: 5.500px; }
.park { font-family: "DejaVu Sans", sans-serif; font-size: 28px; fill: #2f6a1c; }
.county { fill: rgba(190, 190, 190, .75); fill-rule: evenodd; stroke: #666; stroke-width: 1.200px; }
.zone-line { fill: none; stroke: #666; stroke-width: 1px; }
.light-zone { fill: rgba(240, 240, 240, .55); stroke: none; }
.zip { stroke: #666; stroke-width: 1px; }
.none { fill: none; }
.d0 { fill: rgba(100, 105, 105, .04); }
.d1 { fill: rgba(100, 105, 105, .12); }
.d2 { fill: rgba(90, 95, 100, .22); }
.d3 { fill: rgba(80, 85, 95, .34); }
.d4 { fill: rgba(60, 65, 75, .75); }
.vashon { fill: #b1b3b3; }
.light-patch { fill: #d6dbe8; stroke: none; }
.zip-lines { fill: none; stroke: #666; stroke-width: 1px; }
.credit-bg { fill: rgba(255, 255, 255, .72); }
.credit { font-family: "Liberation Sans", sans-serif; font-size: 27.500px; fill: #666; }
.shield-w { fill: #fff; }
.shield-b { fill: #3c4a9e; }
.shield-r { fill: #b5282f; }
.shield-t { font-family: "DejaVu Sans", sans-serif; font-size: 20px; font-weight: 700; fill: #fff; text-anchor: middle; }

/* heat colours shared by the calendar and the table */
.c-b57ea3 { background: #b57ea3; } .c-b97fa5 { background: #b97fa5; } .c-a56f98 { background: #a56f98; } .c-835583 { background: #835583; }
.c-7e4e78 { background: #7e4e78; } .c-bc84a9 { background: #bc84a9; } .c-c088ae { background: #c088ae; } .c-bb82a7 { background: #bb82a7; }
.c-c991b6 { background: #c991b6; } .c-cc97bb { background: #cc97bb; } .c-dbaaca { background: #dbaaca; } .c-b57da2 { background: #b57da2; }
.c-c48cb1 { background: #c48cb1; } .c-c68fb4 { background: #c68fb4; } .c-d09dbf { background: #d09dbf; } .c-966690 { background: #966690; }
.c-c68fb5 { background: #c68fb5; } .c-c692b7 { background: #c692b7; } .c-bd86aa { background: #bd86aa; } .c-c28ab0 { background: #c28ab0; }
.c-c188ae { background: #c188ae; } .c-d09cbf { background: #d09cbf; } .c-ecc8e4 { background: #ecc8e4; } .c-bc85aa { background: #bc85aa; }
.c-c28bb0 { background: #c28bb0; } .c-c790b5 { background: #c790b5; } .c-976791 { background: #976791; } .c-7d4c77 { background: #7d4c77; }
.c-a87199 { background: #a87199; } .c-ac749c { background: #ac749c; } .c-a56d97 { background: #a56d97; } .c-c48db2 { background: #c48db2; }
.c-bc85a9 { background: #bc85a9; } .c-b57ca1 { background: #b57ca1; } .c-a36c95 { background: #a36c95; } .c-a66d98 { background: #a66d98; }
.c-dfb0d1 { background: #dfb0d1; } .c-cf9dbe { background: #cf9dbe; } .c-d19fc0 { background: #d19fc0; } .c-c995b8 { background: #c995b8; }
```
